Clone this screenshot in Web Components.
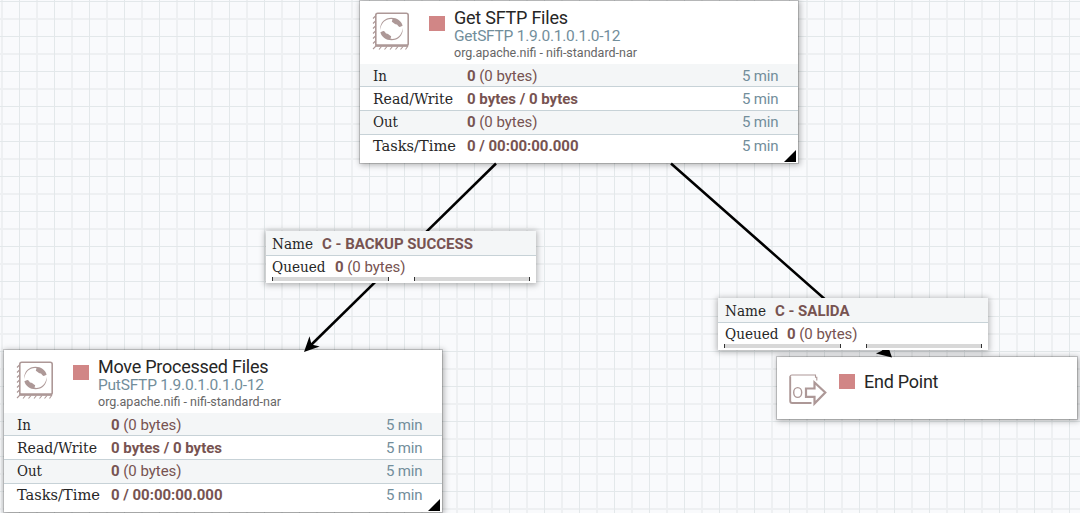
<!DOCTYPE html>
<html lang="en">
<head>
<meta charset="utf-8">
<title>NiFi Flow</title>
<style>
html,body{margin:0;height:100%;overflow:hidden}
body{font-family:Roboto,"Open Sans",sans-serif}
</style>
</head>
<body>
<flow-canvas>
  <flow-processor style="left:360px;top:1px" name="Get SFTP Files" nw="114" type="GetSFTP 1.9.0.1.0.1.0-12" tw="166.5"></flow-processor>
  <flow-processor style="left:4px;top:350px" name="Move Processed Files" nw="170.5" type="PutSFTP 1.9.0.1.0.1.0-12" tw="166"></flow-processor>
  <flow-port style="left:777px;top:356.5px" name="End Point" nw="74.5"></flow-port>
  <flow-edges></flow-edges>
  <flow-connection style="left:265.5px;top:231px" name="C - BACKUP SUCCESS" nw="151"></flow-connection>
  <flow-connection style="left:717.8px;top:298px" name="C - SALIDA" nw="74.5"></flow-connection>
</flow-canvas>
<script>
class FitText extends HTMLElement {
  connectedCallback() {
    const w = +this.getAttribute('w');
    const mode = this.hasAttribute('slab') ? 'spacingAndGlyphs' : 'spacing';
    this.attachShadow({mode: 'open'}).innerHTML = `<style>
      :host{display:block;width:${w}px;height:20px;flex:none}
      svg{display:block;overflow:visible}
      :host([slab]){font-family:"DejaVu Serif Condensed","DejaVu Serif",serif;font-size:14.3px;color:#262626}
      text{fill:currentColor;white-space:pre}
      .b{font-weight:700}
    </style><svg width="${w}" height="20"><text x="0" y="15" textLength="${w}" lengthAdjust="${mode}"></text></svg>`;
    const t = this.shadowRoot.querySelector('text');
    const bold = this.getAttribute('bold');
    if (bold) {
      const s = document.createElementNS('http://www.w3.org/2000/svg', 'tspan');
      s.setAttribute('class', 'b');
      s.textContent = bold;
      t.append(s);
    }
    t.append(this.getAttribute('text') || '');
  }
}
customElements.define('fit-text', FitText);

class FlowCanvas extends HTMLElement {
  constructor() {
    super();
    this.attachShadow({mode: 'open'}).innerHTML = `<style>
      :host{display:block;position:relative;width:1080px;height:513px;overflow:hidden;background-color:#f9fafc;
        background-image:
          linear-gradient(90deg,#e3e8ea 1px,transparent 1px),
          linear-gradient(#e3e8ea 1px,transparent 1px),
          linear-gradient(90deg,#eef0f2 2px,transparent 2px),
          linear-gradient(#eef0f2 2px,transparent 2px);
        background-size:35px 35px;
        background-position:19px 0,0 1px,1px 0,0 18px}
    </style><slot></slot>`;
  }
}
customElements.define('flow-canvas', FlowCanvas);

class StatRow extends HTMLElement {
  connectedCallback() {
    const g = n => this.getAttribute(n) || '';
    this.attachShadow({mode: 'open'}).innerHTML = `<style>
      :host{display:grid;grid-template-columns:94px 1fr 56px;box-sizing:border-box;padding-left:12.5px;
        border-bottom:1px solid #c7d2d7;font-size:15px;color:#775351}
      :host([shade]){background:#f4f6f7}
      :host([last]){border-bottom:0}
      .time{color:#728e9b}
    </style><fit-text slab text="${g('label')}" w="${g('lw')}"></fit-text>
    <fit-text bold="${g('bold')}" text="${g('rest')}" w="${g('vw')}"></fit-text>
    <fit-text class="time" text="5 min" w="36.5"></fit-text>`;
  }
}
customElements.define('stat-row', StatRow);

const cardBox = `box-sizing:border-box;background:#fff;box-shadow:0 0 0 1px rgba(0,0,0,.16),1px 1px 6px 1px rgba(0,0,0,.3);`;

class FlowProcessor extends HTMLElement {
  connectedCallback() {
    const g = n => this.getAttribute(n);
    const swirl = 'M9.200 20C8.700 12.500 14 7.700 20.500 7.700C26 7.700 30.600 11 31.600 15.700L28.800 16.900C27.500 17.100 27 15.500 26 14.600C24 14.700 22.500 12.800 20.800 11.800L21.500 9.200C15 8.400 10.200 12.500 9.200 20Z';
    this.attachShadow({mode: 'open'}).innerHTML = `<style>
      :host{display:block;position:absolute;width:438px;height:162px;${cardBox}}
      header{display:flex;height:63px}
      .icon{width:40px;height:40px;margin:9px 0 0 11px}
      .stop{width:16px;height:15px;margin:15px 0 0 17.5px;background:#d18686}
      .titles{margin:0 0 0 9px}
      .name{font-size:18px;color:#262626;height:17px;margin-top:8px;display:block}
      .type{font-size:15.5px;color:#728e9b;height:16px}
      .bundle{font-size:12.5px;color:#666}
      .r1{height:23px;padding-top:2px}
      .r2{height:24px;padding-top:2px}
      .r3{height:24px;padding-top:1px}
      .r4{height:28px;padding-top:1px}
      .corner{position:absolute;right:2px;bottom:1px}
    </style>
    <header>
      <svg class="icon" viewBox="0 0 40 40" fill="none" stroke="#ad9897">
        <rect x="4.800" y="3.200" width="32.400" height="32.500" rx="2" stroke-width="1.6"/>
        <path d="M4.200 35.500H37" stroke-width="2.6"/>
        <path d="M4.500 6l-2.500 2.500M4.500 11l-2.500 2.500M4.500 16l-2.500 2.500M4.500 21l-2.500 2.500M4.500 26l-2.500 2.500M4.500 31l-2.500 2.500M5 36l-3 3M10.500 36.500l-2.500 3M16 36.500l-2.500 3M21.500 36.500l-2.500 3M27 36.500l-2.500 3M32 36.500l-2.500 3M37 36l-2.500 3.500" stroke-width="1.1"/>
        <g fill="#ad9897" stroke="none">
          <path d="${swirl}"/>
          <path transform="rotate(180 20.500 19)" d="${swirl}"/>
        </g>
      </svg>
      <div class="stop"></div>
      <div class="titles">
        <fit-text class="name" text="${g('name')}" w="${g('nw')}"></fit-text>
        <fit-text class="type" text="${g('type')}" w="${g('tw')}"></fit-text>
        <fit-text class="bundle" text="org.apache.nifi - nifi-standard-nar" w="183"></fit-text>
      </div>
    </header>
    <stat-row class="r1" shade label="In" lw="14" bold="0" rest=" (0 bytes)" vw="70.5"></stat-row>
    <stat-row class="r2" label="Read/Write" lw="80" bold="0 bytes / 0 bytes" vw="111"></stat-row>
    <stat-row class="r3" shade label="Out" lw="25" bold="0" rest=" (0 bytes)" vw="70.5"></stat-row>
    <stat-row class="r4" last label="Tasks/Time" lw="83" bold="0 / 00:00:00.000" vw="111.5"></stat-row>
    <svg class="corner" width="12" height="12"><path d="M12 0V12H0Z"/></svg>`;
  }
}
customElements.define('flow-processor', FlowProcessor);

class FlowPort extends HTMLElement {
  connectedCallback() {
    const g = n => this.getAttribute(n);
    this.attachShadow({mode: 'open'}).innerHTML = `<style>
      :host{display:flex;position:absolute;width:299.5px;height:62px;${cardBox}}
      .icon{width:42px;height:36px;margin:15px 0 0 10px}
      .stop{width:16px;height:15px;margin:17.5px 0 0 10px;background:#d18686}
      .name{font-size:18px;color:#262626;margin:16px 0 0 9px}
    </style>
    <svg class="icon" viewBox="0 0 42 36" fill="none" stroke="#ad9897">
      <path d="M29.800 8.500V5.200H28.500V3H5Q3 3 3 5" stroke-width="1.1"/>
      <path d="M3.200 4.500V29Q3.200 31 5.200 31H24.500" stroke-width="1.9"/>
      <ellipse cx="10.700" cy="20.500" rx="4" ry="4.900" stroke-width="1.4"/>
      <path d="M19 16.500H27.500V10.500L38.300 20.500L27.500 31.500V24.800H19Z" stroke-width="2.2"/>
    </svg>
    <div class="stop"></div>
    <fit-text class="name" text="${g('name')}" w="${g('nw')}"></fit-text>`;
  }
}
customElements.define('flow-port', FlowPort);

class FlowEdges extends HTMLElement {
  constructor() {
    super();
    this.attachShadow({mode: 'open'}).innerHTML = `<style>
      :host{display:block;position:absolute;inset:0}
      svg{display:block}
    </style><svg width="1080" height="513">
      <g fill="none" stroke="#000" stroke-width="2.5">
        <path d="M496 163.500L309 347"/><path d="M671 163.500L853 324L887 353"/>
      </g>
      <path d="M304 352L309.500 336.300L311.500 344.500L319.700 346.600Z"/>
      <path d="M892 357.500L876 353.500L883.500 350L886.500 342Z"/>
    </svg>`;
  }
}
customElements.define('flow-edges', FlowEdges);

class FlowConnection extends HTMLElement {
  connectedCallback() {
    const g = n => this.getAttribute(n);
    this.attachShadow({mode: 'open'}).innerHTML = `<style>
      :host{display:block;position:absolute;width:270.5px;height:52px;box-sizing:border-box;background:#fff;
        font-size:15px;color:#775351;box-shadow:0 1px 6px 1px rgba(0,0,0,.3)}
      .row{display:flex;box-sizing:border-box;padding-left:6.8px}
      .head{height:25px;padding-top:3px;background:#f4f6f7;border-bottom:1px solid #c7d2d7;gap:9px}
      .queue{height:21px;padding-top:1px;gap:9px}
      .bars{display:flex;gap:25px;padding-left:6.5px}
      .bars i{box-sizing:border-box;width:116.5px;height:4px;background:#d8d8d8;border:solid #333;border-width:0 1px}
    </style>
    <div class="row head"><fit-text slab text="Name" w="41"></fit-text><fit-text bold="${g('name')}" w="${g('nw')}"></fit-text></div>
    <div class="row queue"><fit-text slab text="Queued" w="53.5"></fit-text><fit-text bold="0" text=" (0 bytes)" w="70.5"></fit-text></div>
    <div class="bars"><i></i><i></i></div>`;
  }
}
customElements.define('flow-connection', FlowConnection);
</script>
</body>
</html>
